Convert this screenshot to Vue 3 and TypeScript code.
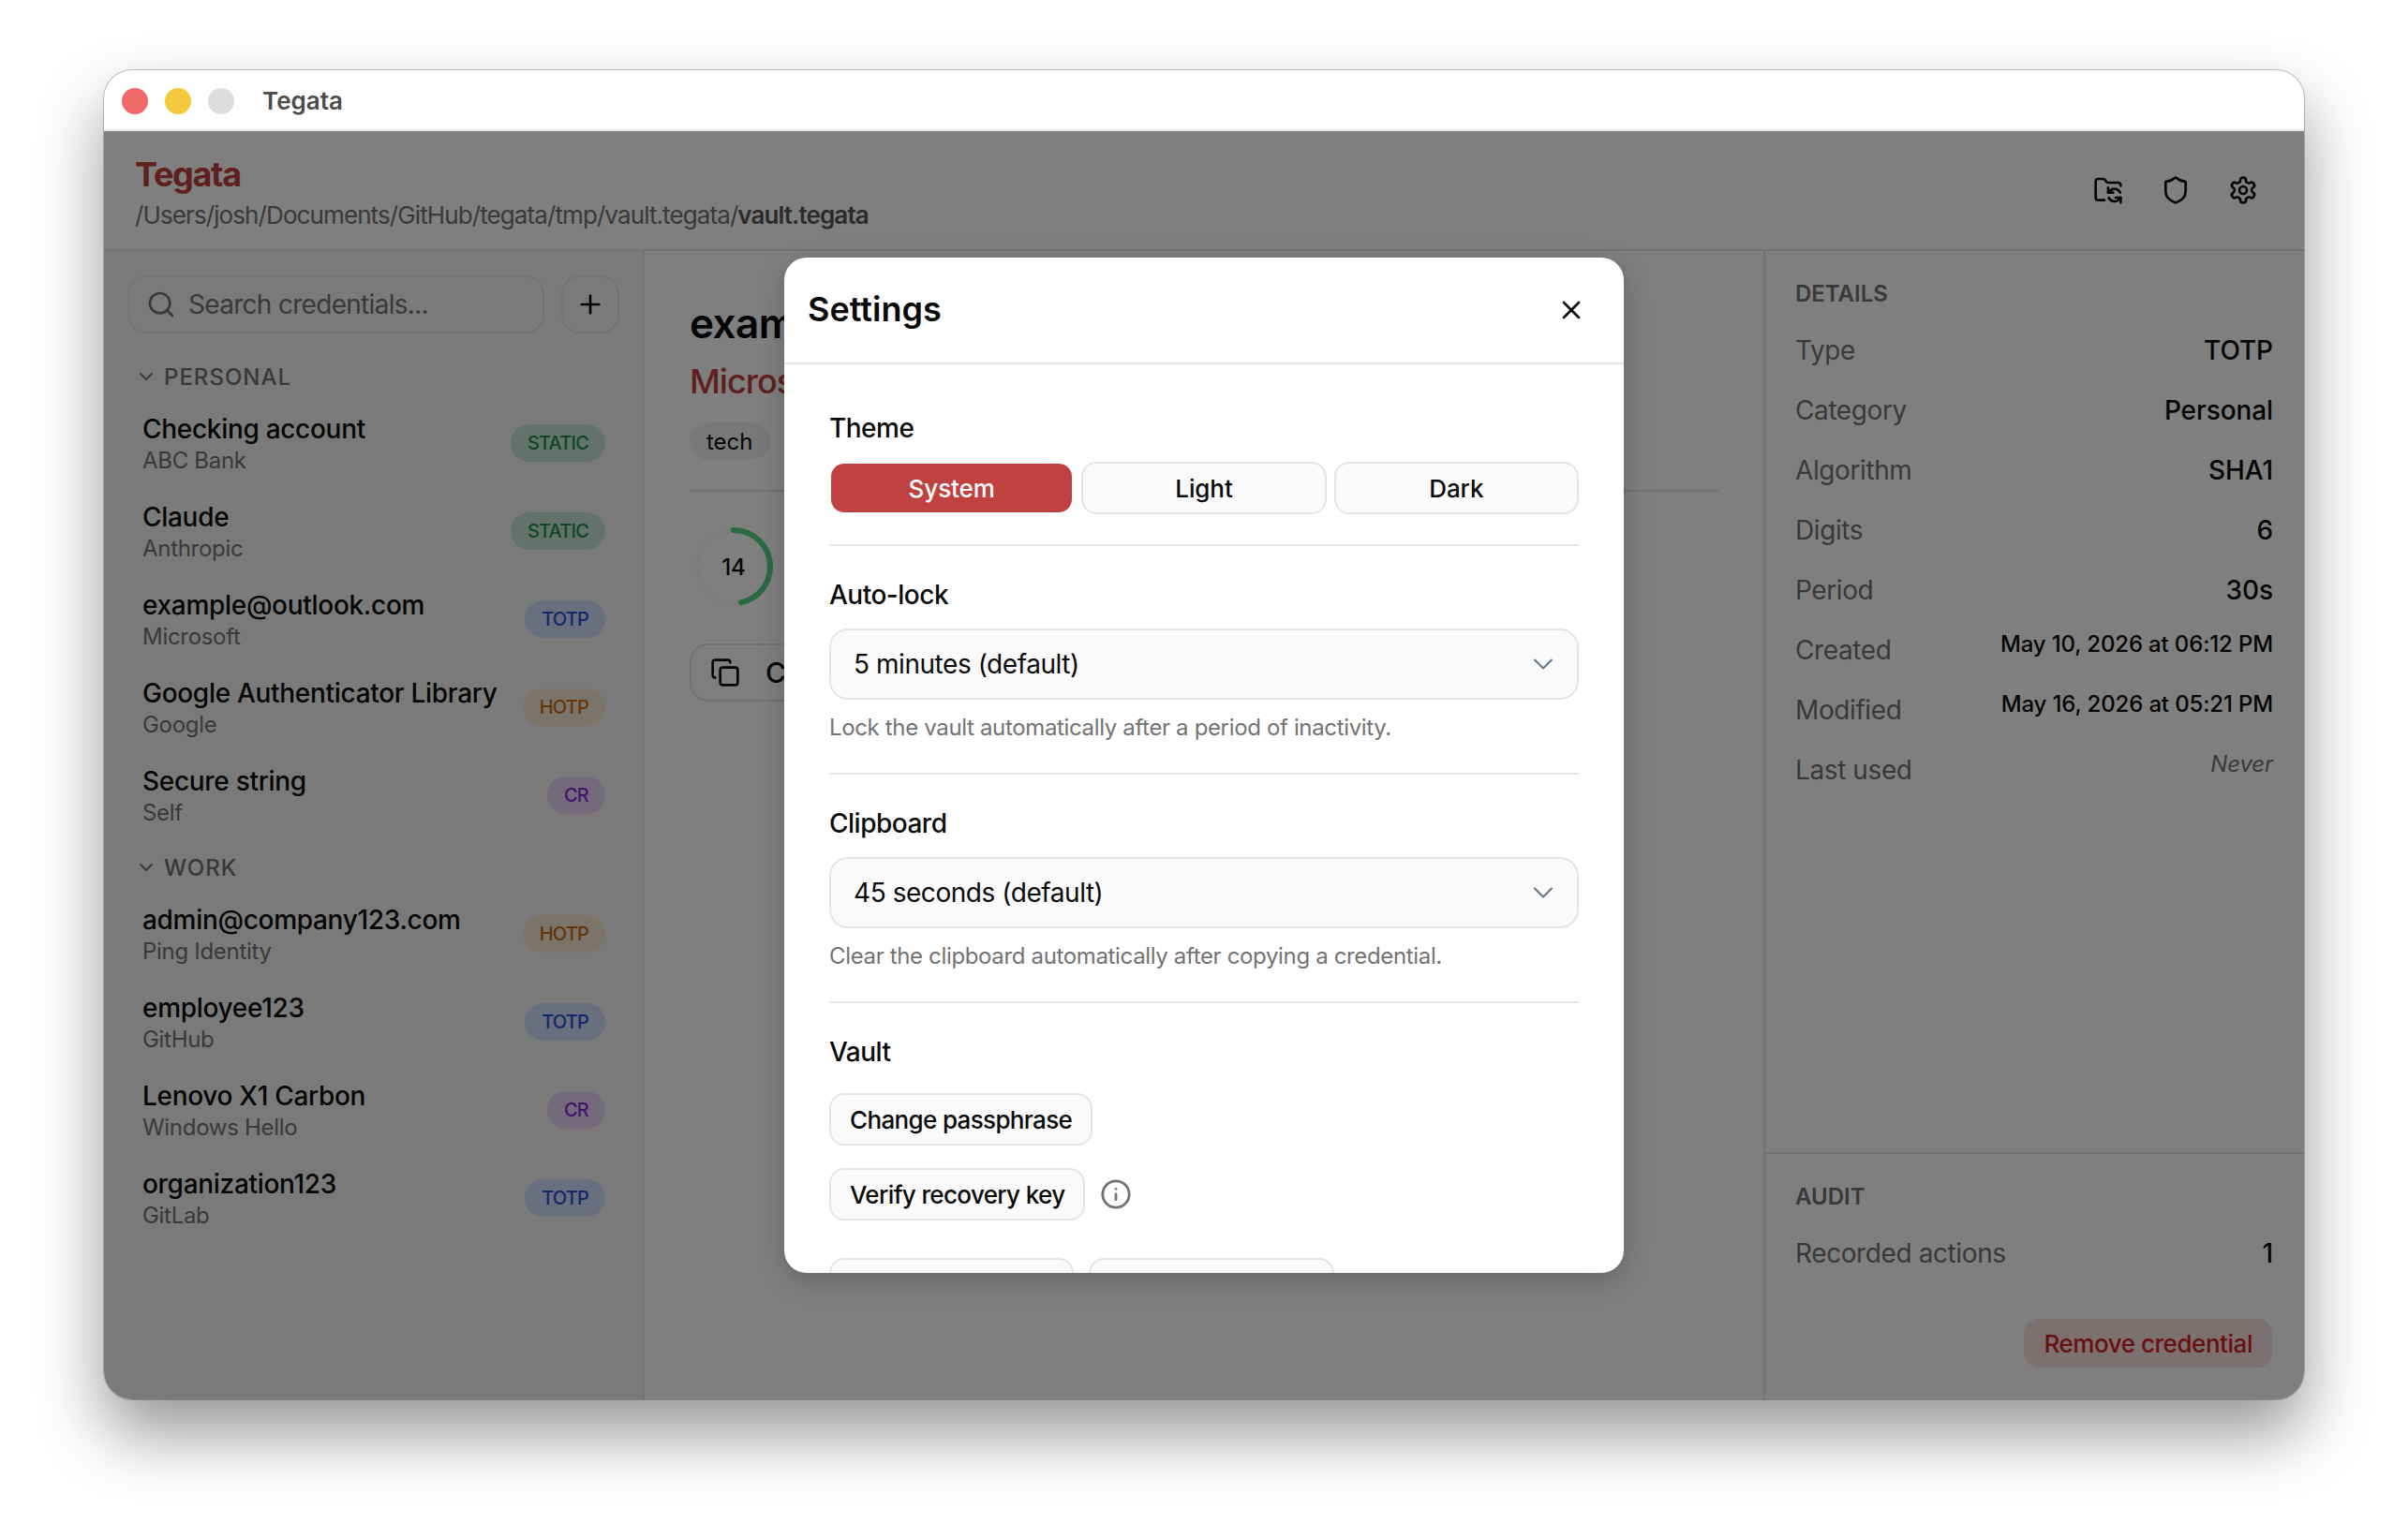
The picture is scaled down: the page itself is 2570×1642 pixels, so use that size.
<script setup lang="ts">
type Kind = 'STATIC' | 'TOTP' | 'HOTP' | 'CR'

interface Credential {
  name: string
  issuer: string
  kind: Kind
}

const groups: { title: string; items: Credential[] }[] = [
  {
    title: 'PERSONAL',
    items: [
      { name: 'Checking account', issuer: 'ABC Bank', kind: 'STATIC' },
      { name: 'Claude', issuer: 'Anthropic', kind: 'STATIC' },
      { name: 'example@outlook.com', issuer: 'Microsoft', kind: 'TOTP' },
      { name: 'Google Authenticator Library', issuer: 'Google', kind: 'HOTP' },
      { name: 'Secure string', issuer: 'Self', kind: 'CR' },
    ],
  },
  {
    title: 'WORK',
    items: [
      { name: 'admin@company123.com', issuer: 'Ping Identity', kind: 'HOTP' },
      { name: 'employee123', issuer: 'GitHub', kind: 'TOTP' },
      { name: 'Lenovo X1 Carbon', issuer: 'Windows Hello', kind: 'CR' },
      { name: 'organization123', issuer: 'GitLab', kind: 'TOTP' },
    ],
  },
]

const details: { label: string; value: string; style?: string }[] = [
  { label: 'Type', value: 'TOTP' },
  { label: 'Category', value: 'Personal' },
  { label: 'Algorithm', value: 'SHA1' },
  { label: 'Digits', value: '6' },
  { label: 'Period', value: '30s' },
  { label: 'Created', value: 'May 10, 2026 at 06:12 PM', style: 'date' },
  { label: 'Modified', value: 'May 16, 2026 at 05:21 PM', style: 'date' },
  { label: 'Last used', value: 'Never', style: 'never' },
]

const themes = ['System', 'Light', 'Dark']

const settingsSelects = [
  {
    label: 'Auto-lock',
    value: '5 minutes (default)',
    hint: 'Lock the vault automatically after a period of inactivity.',
  },
  {
    label: 'Clipboard',
    value: '45 seconds (default)',
    hint: 'Clear the clipboard automatically after copying a credential.',
  },
]

const remaining = 14
const radius = 39
const circumference = 2 * Math.PI * radius
const dash = `${(remaining / 30) * circumference} ${circumference}`
</script>

<template>
  <div class="window">
    <div class="titlebar">
      <span class="light red" />
      <span class="light yellow" />
      <span class="light grey" />
      <span class="window-title">Tegata</span>
    </div>

    <div class="app">
      <header class="top">
        <div class="top-text">
          <div class="brand">Tegata</div>
          <div class="path">/Users/josh/Documents/GitHub/tegata/tmp/vault.tegata/<b>vault.tegata</b></div>
        </div>
        <div class="top-icons">
          <svg class="icon" viewBox="0 0 24 24">
            <path d="M9 20H4a2 2 0 0 1-2-2V5a2 2 0 0 1 2-2h3.9a2 2 0 0 1 1.69.9l.81 1.2a2 2 0 0 0 1.67.9H20a2 2 0 0 1 2 2v.5" />
            <path d="M12 10v4h4" />
            <path d="m12 14 1.535-1.605a5 5 0 0 1 8 1.5" />
            <path d="M22 22v-4h-4" />
            <path d="m22 18-1.535 1.605a5 5 0 0 1-8-1.5" />
          </svg>
          <svg class="icon" viewBox="0 0 24 24">
            <path d="M20 13c0 5-3.5 7.5-7.66 8.95a1 1 0 0 1-.67-.01C7.5 20.5 4 18 4 13V6a1 1 0 0 1 1-1c2 0 4.5-1.2 6.24-2.72a1.17 1.17 0 0 1 1.52 0C14.51 3.81 17 5 19 5a1 1 0 0 1 1 1z" />
          </svg>
          <svg class="icon" viewBox="0 0 24 24">
            <path d="M12.22 2h-.44a2 2 0 0 0-2 2v.18a2 2 0 0 1-1 1.73l-.43.25a2 2 0 0 1-2 0l-.15-.08a2 2 0 0 0-2.73.73l-.22.38a2 2 0 0 0 .73 2.73l.15.1a2 2 0 0 1 1 1.72v.51a2 2 0 0 1-1 1.74l-.15.09a2 2 0 0 0-.73 2.73l.22.38a2 2 0 0 0 2.73.73l.15-.08a2 2 0 0 1 2 0l.43.25a2 2 0 0 1 1 1.73V20a2 2 0 0 0 2 2h.44a2 2 0 0 0 2-2v-.18a2 2 0 0 1 1-1.73l.43-.25a2 2 0 0 1 2 0l.15.08a2 2 0 0 0 2.73-.73l.22-.39a2 2 0 0 0-.73-2.73l-.15-.08a2 2 0 0 1-1-1.74v-.5a2 2 0 0 1 1-1.74l.15-.09a2 2 0 0 0 .73-2.73l-.22-.38a2 2 0 0 0-2.73-.73l-.15.08a2 2 0 0 1-2 0l-.43-.25a2 2 0 0 1-1-1.73V4a2 2 0 0 0-2-2z" />
            <circle cx="12" cy="12" r="3" />
          </svg>
        </div>
      </header>

      <div class="columns">
        <aside class="sidebar">
          <div class="search-row">
            <div class="search">
              <svg class="icon search-icon" viewBox="0 0 24 24">
                <circle cx="11" cy="11" r="8" />
                <path d="m21 21-4.3-4.3" />
              </svg>
              <span>Search credentials...</span>
            </div>
            <div class="add">
              <svg class="icon" viewBox="0 0 24 24">
                <path d="M5 12h14" />
                <path d="M12 5v14" />
              </svg>
            </div>
          </div>

          <section v-for="group in groups" :key="group.title">
            <div class="group-title">
              <svg class="chev" viewBox="0 0 24 24"><path d="m6 9 6 6 6-6" /></svg>
              {{ group.title }}
            </div>
            <div v-for="item in group.items" :key="item.name" class="row">
              <div>
                <div class="row-name">{{ item.name }}</div>
                <div class="row-issuer">{{ item.issuer }}</div>
              </div>
              <span :class="['badge', `badge-${item.kind.toLowerCase()}`]">{{ item.kind }}</span>
            </div>
          </section>
        </aside>

        <main class="main">
          <h1 class="cred-name">example@outlook.com</h1>
          <div class="cred-issuer">Microsoft</div>
          <div class="tags">
            <span class="tag">tech</span>
          </div>
          <div class="code-row">
            <div class="timer">
              <svg viewBox="0 0 84 84">
                <circle class="track" cx="42" cy="42" :r="radius" />
                <circle class="arc" cx="42" cy="42" :r="radius" :stroke-dasharray="dash" transform="rotate(-90 42 42)" />
              </svg>
              <span>{{ remaining }}</span>
            </div>
          </div>
          <div class="copy">
            <svg class="icon" viewBox="0 0 24 24">
              <rect x="8" y="8" width="14" height="14" rx="2" ry="2" />
              <path d="M4 16c-1.1 0-2-.9-2-2V4c0-1.1.9-2 2-2h10c1.1 0 2 .9 2 2" />
            </svg>
            <span>Copy code</span>
          </div>
        </main>

        <aside class="panel">
          <div class="panel-details">
            <h2>DETAILS</h2>
            <div v-for="d in details" :key="d.label" class="detail">
              <span class="detail-label">{{ d.label }}</span>
              <span :class="['detail-value', d.style]">{{ d.value }}</span>
            </div>
          </div>
          <div class="panel-audit">
            <h2>AUDIT</h2>
            <div class="detail">
              <span class="detail-label">Recorded actions</span>
              <span class="detail-value">1</span>
            </div>
            <div class="remove-row">
              <span class="remove">Remove credential</span>
            </div>
          </div>
        </aside>
      </div>

      <div class="overlay">
        <div class="modal">
          <div class="modal-head">
            <span class="modal-title">Settings</span>
            <svg class="icon close" viewBox="0 0 24 24">
              <path d="M18 6 6 18" />
              <path d="m6 6 12 12" />
            </svg>
          </div>
          <div class="modal-body">
            <div class="setting">
              <div class="setting-label">Theme</div>
              <div class="theme-row">
                <span v-for="(t, i) in themes" :key="t" :class="['theme-btn', { active: i === 0 }]">{{ t }}</span>
              </div>
            </div>

            <div v-for="s in settingsSelects" :key="s.label" class="setting">
              <div class="setting-label">{{ s.label }}</div>
              <div class="select">
                <span>{{ s.value }}</span>
                <svg class="select-chev" viewBox="0 0 24 24"><path d="m6 9 6 6 6-6" /></svg>
              </div>
              <div class="hint">{{ s.hint }}</div>
            </div>

            <div class="setting vault">
              <div class="setting-label">Vault</div>
              <div class="vault-row first">
                <span class="btn">Change passphrase</span>
              </div>
              <div class="vault-row">
                <span class="btn">Verify recovery key</span>
                <svg class="info" viewBox="0 0 24 24">
                  <circle cx="12" cy="12" r="10" />
                  <path d="M12 16v-4" />
                  <path d="M12 8h.01" />
                </svg>
              </div>
              <div class="vault-row last">
                <span class="btn export" />
                <span class="btn import" />
              </div>
            </div>
          </div>
        </div>
      </div>
    </div>
  </div>
</template>

<style>
html,
body {
  margin: 0;
  background: #fff;
}
</style>

<style scoped>
* {
  box-sizing: border-box;
}

.window {
  position: relative;
  width: 2348px;
  height: 1419px;
  margin: 75px 0 148px 111px;
  display: flex;
  flex-direction: column;
  border-radius: 30px;
  overflow: hidden;
  background: #fff;
  font-family: Inter, "Liberation Sans", sans-serif;
  color: #0a0a0a;
  box-shadow: 0 0 0 1px rgba(0, 0, 0, 0.22), 0 36px 72px rgba(0, 0, 0, 0.42);
}

.titlebar {
  height: 65px;
  flex: none;
  display: flex;
  align-items: center;
  padding: 2px 0 0 19px;
  gap: 18px;
  border-bottom: 2px solid #e8e8e8;
}

.light {
  width: 28px;
  height: 28px;
  border-radius: 50%;
}

.red {
  background: #f06a6a;
}

.yellow {
  background: #f4c93f;
}

.grey {
  background: #dcdcdc;
}

.window-title {
  margin-left: 12px;
  font-size: 26px;
  font-weight: 600;
  color: #4c4c4c;
}

.app {
  position: relative;
  flex: 1;
  min-height: 0;
  display: flex;
  flex-direction: column;
}

.top {
  height: 128px;
  flex: none;
  display: flex;
  justify-content: space-between;
  align-items: center;
  padding: 0 49px 0 33px;
  border-bottom: 2px solid #e5e5e5;
}

.top-text {
  padding-top: 5px;
}

.brand {
  font-size: 36px;
  line-height: 44px;
  font-weight: 700;
  color: #c04040;
  letter-spacing: -1.3px;
  transform: translateY(1px);
}

.path {
  margin-top: 5px;
  font-size: 26px;
  line-height: 36px;
  letter-spacing: -0.9px;
  color: #737373;
}

.path b {
  font-weight: 600;
  color: #555;
}

.top-icons {
  display: flex;
  gap: 40px;
}

.icon {
  width: 32px;
  height: 32px;
  fill: none;
  stroke: currentColor;
  stroke-width: 2;
  stroke-linecap: round;
  stroke-linejoin: round;
  flex: none;
}

.columns {
  flex: 1;
  min-height: 0;
  display: flex;
}

.sidebar {
  width: 577px;
  flex: none;
  padding: 26px 25px 0;
  background: #f5f5f5;
  border-right: 2px solid #e5e5e5;
}

.search-row {
  display: flex;
  gap: 18px;
  margin-bottom: 20px;
}

.search {
  flex: 1;
  height: 62px;
  display: flex;
  align-items: center;
  gap: 13px;
  padding-left: 18px;
  border: 2px solid #e5e5e5;
  border-radius: 20px;
  font-size: 28px;
  letter-spacing: -0.7px;
  color: #737373;
}

.search-icon {
  color: #737373;
}

.add {
  width: 62px;
  height: 62px;
  display: flex;
  align-items: center;
  justify-content: center;
  border: 2px solid #e5e5e5;
  border-radius: 20px;
}

.group-title {
  height: 52px;
  display: flex;
  align-items: center;
  gap: 7px;
  padding-left: 8px;
  font-size: 24px;
  font-weight: 500;
  letter-spacing: 1px;
  color: #737373;
}

section + section .group-title {
  margin-top: 2px;
}

.chev {
  width: 24px;
  height: 24px;
  fill: none;
  stroke: currentColor;
  stroke-width: 2;
  stroke-linecap: round;
  stroke-linejoin: round;
}

.row {
  height: 94px;
  display: flex;
  align-items: center;
  justify-content: space-between;
  padding: 0 15px 2px 16px;
}

.row-name {
  font-size: 28px;
  line-height: 36px;
  font-weight: 500;
  letter-spacing: -0.3px;
  white-space: nowrap;
}

.row-issuer {
  font-size: 24px;
  line-height: 32px;
  letter-spacing: -0.3px;
  color: #737373;
}

.badge {
  height: 40px;
  margin-bottom: 2px;
  display: flex;
  align-items: center;
  padding: 0 18px;
  border-radius: 20px;
  font-size: 20px;
  font-weight: 500;
  letter-spacing: -0.8px;
}

.badge-static {
  background: #c8e4d8;
  color: #1e8a55;
}

.badge-totp {
  background: #d2deff;
  color: #2450d0;
}

.badge-hotp {
  background: #f6e8d4;
  color: #c86a10;
}

.badge-cr {
  background: #e6d4f6;
  color: #8428d4;
}

.main {
  flex: 1;
  min-width: 0;
  padding: 49px 48px 0;
  overflow: hidden;
}

.cred-name {
  margin: 0;
  font-size: 44px;
  line-height: 56px;
  font-weight: 600;
  letter-spacing: -0.5px;
  white-space: nowrap;
}

.cred-issuer {
  margin-top: 12px;
  font-size: 36px;
  line-height: 44px;
  font-weight: 500;
  letter-spacing: -1px;
  color: #c04040;
}

.tags {
  margin-top: 22px;
  padding-bottom: 32px;
  border-bottom: 2px solid #e5e5e5;
}

.tag {
  display: inline-flex;
  align-items: center;
  height: 40px;
  padding: 0 18px;
  border-radius: 20px;
  background: #f0f0f0;
  font-size: 24px;
}

.code-row {
  margin-top: 38px;
}

.timer {
  position: relative;
  width: 84px;
  height: 84px;
  margin: 0 0 0 5px;
  display: flex;
  align-items: center;
  justify-content: center;
  font-size: 24px;
  font-weight: 500;
}

.timer svg {
  position: absolute;
  inset: 0;
  fill: none;
  stroke-width: 6;
}

.track {
  stroke: #fafafa;
}

.arc {
  stroke: #55d682;
  stroke-linecap: round;
}

.copy {
  width: 400px;
  height: 62px;
  margin-top: 40px;
  display: flex;
  align-items: center;
  gap: 27px;
  padding-left: 20px;
  border: 2px solid #e5e5e5;
  border-radius: 20px;
  font-size: 30px;
  font-weight: 500;
}

.panel {
  width: 577px;
  flex: none;
  display: flex;
  flex-direction: column;
  border-left: 2px solid #e5e5e5;
  padding: 0;
}

.panel h2 {
  margin: 0 0 16px;
  font-size: 24px;
  line-height: 24px;
  font-weight: 600;
  color: #737373;
}

.panel-details {
  flex: 1;
  padding: 34px 33px 0 32px;
}

.panel-audit {
  padding: 34px 33px 34px 32px;
  border-top: 2px solid #e5e5e5;
}

.detail {
  height: 64px;
  display: flex;
  justify-content: space-between;
  align-items: flex-start;
  font-size: 28px;
  line-height: 64px;
}

.detail-label {
  color: #737373;
  letter-spacing: -0.4px;
}

.detail-value {
  font-weight: 500;
  letter-spacing: -0.1px;
}

.detail-value.date {
  font-size: 24px;
  line-height: 51px;
  letter-spacing: -0.15px;
}

.detail-value.never {
  font-size: 24px;
  line-height: 51px;
  font-weight: 400;
  font-style: italic;
  color: #737373;
}

.remove-row {
  display: flex;
  justify-content: flex-end;
  margin-top: 38px;
  padding-right: 1px;
}

.remove {
  height: 52px;
  display: flex;
  align-items: center;
  padding: 0 21px;
  border-radius: 16px;
  background: #fae0e0;
  color: #d41f1f;
  font-size: 26px;
  font-weight: 500;
  letter-spacing: -0.45px;
}

.overlay {
  position: absolute;
  inset: 0;
  display: flex;
  align-items: center;
  justify-content: center;
  background: rgba(0, 0, 0, 0.5);
}

.modal {
  width: 896px;
  height: 1084px;
  display: flex;
  flex-direction: column;
  overflow: hidden;
  border-radius: 24px;
  background: #fff;
  box-shadow: 0 8px 30px rgba(0, 0, 0, 0.2);
}

.modal-head {
  height: 114px;
  flex: none;
  display: flex;
  align-items: center;
  justify-content: space-between;
  padding: 0 40px 0 25px;
  border-bottom: 2px solid #e5e5e5;
}

.modal-title {
  font-size: 36px;
  line-height: 40px;
  margin-top: -2px;
  font-weight: 600;
}

.modal-body {
  flex: 1;
  min-height: 0;
  overflow: hidden;
  padding: 16px 48px 0;
}

.setting {
  padding: 34px 0 32px;
  border-bottom: 2px solid #e5e5e5;
}

.setting.vault {
  border-bottom: 0;
}

.setting-label {
  font-size: 28px;
  line-height: 36px;
  font-weight: 500;
  letter-spacing: -0.5px;
  margin-bottom: 18px;
}

.theme-row {
  display: flex;
  gap: 8px;
}

.theme-btn {
  flex: 1;
  height: 56px;
  display: flex;
  align-items: center;
  justify-content: center;
  border: 2px solid #e5e5e5;
  border-radius: 16px;
  background: #fafafa;
  font-size: 26px;
  font-weight: 500;
  letter-spacing: -0.1px;
}

.theme-btn.active {
  background: #bf4240;
  background-clip: padding-box;
  border-color: transparent;
  color: #fff;
}

.select {
  height: 76px;
  display: flex;
  align-items: center;
  justify-content: space-between;
  padding: 0 18px 0 24px;
  border: 2px solid #e5e5e5;
  border-radius: 20px;
  background: #fafafa;
  font-size: 28px;
  letter-spacing: -0.45px;
}

.select-chev {
  width: 36px;
  height: 36px;
  fill: none;
  stroke: #64748b;
  stroke-width: 1.4;
  stroke-linecap: round;
  stroke-linejoin: round;
}

.hint {
  margin-top: 14px;
  font-size: 24px;
  line-height: 32px;
  letter-spacing: -0.35px;
  color: #737373;
}

.vault .setting-label {
  margin-bottom: 26px;
}

.vault-row {
  display: flex;
  align-items: center;
  gap: 16px;
  margin-top: 24px;
}

.vault-row.first {
  margin-top: 0;
}

.vault-row.last {
  margin-top: 40px;
}

.btn {
  height: 56px;
  display: flex;
  align-items: center;
  padding: 0 20px;
  border: 2px solid #e5e5e5;
  border-radius: 16px;
  background: #fafafa;
  font-size: 26px;
  font-weight: 500;
  letter-spacing: -0.65px;
  white-space: nowrap;
}

.btn.export {
  width: 261px;
}

.btn.import {
  width: 262px;
}

.info {
  width: 34px;
  height: 34px;
  fill: none;
  stroke: #737373;
  stroke-width: 2;
  stroke-linecap: round;
  stroke-linejoin: round;
}
</style>
